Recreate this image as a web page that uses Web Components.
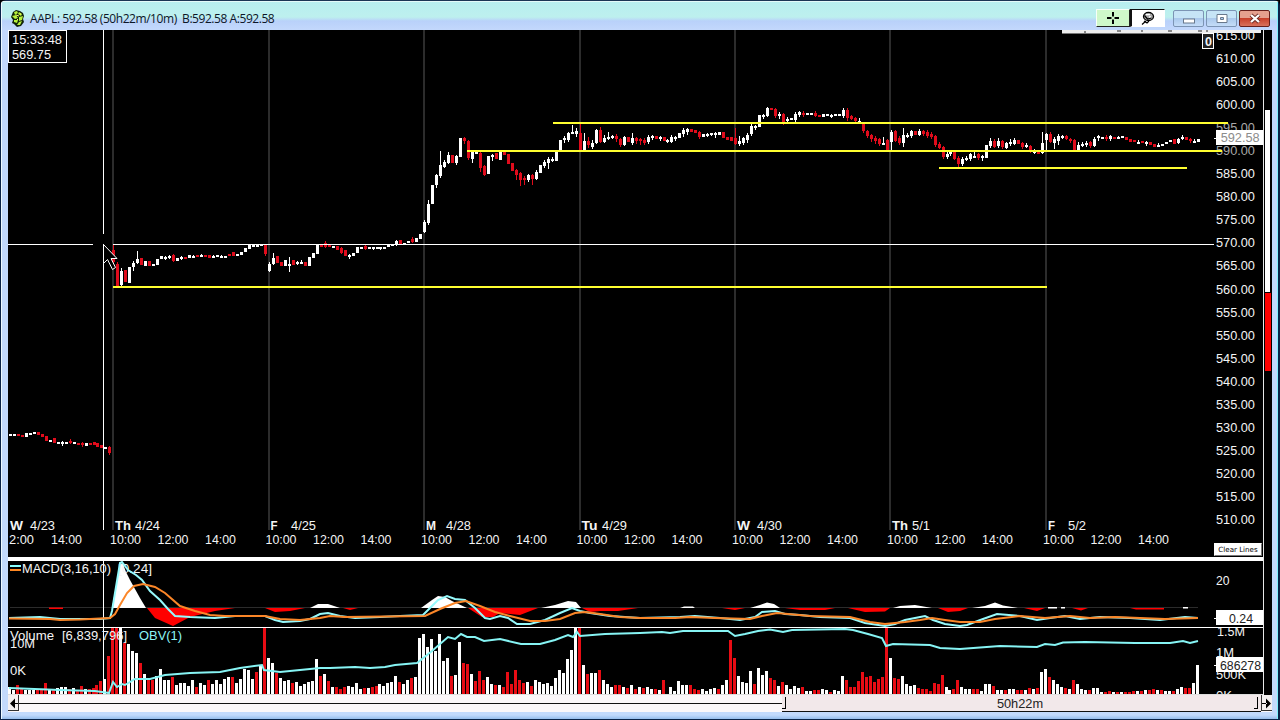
<!DOCTYPE html>
<html lang="en">
<head>
<meta charset="utf-8">
<title>AAPL: 592.58</title>
<style>
    body { margin: 0; background: #000; font-family: "Liberation Sans", sans-serif; overflow: hidden; }
</style>
</head>
<body>
<chart-window>
    <title-bar slot="title">AAPL: 592.58 (50h22m/10m)&nbsp; B:592.58 A:592.58</title-bar>
    <price-pane slot="price"></price-pane>
    <price-axis slot="price-axis"></price-axis>
    <macd-pane slot="macd"></macd-pane>
    <study-axis slot="macd-axis" kind="macd"></study-axis>
    <volume-pane slot="volume"></volume-pane>
    <study-axis slot="volume-axis" kind="volume"></study-axis>
    <range-meter slot="meter"></range-meter>
    <time-scroll slot="scroll">50h22m</time-scroll>
</chart-window>

<script>
//bars are one 10 minute candle each, 39 per trading day
const FIRST_X = 10.3;
const STEP = 3.986;
const barX = (k) => FIRST_X + k * STEP;

//colour, body top, body bottom, wick top, wick bottom (wicks are optional)
const CANDLES = `
w434-436 w434-435 r434-436 r435-437 w433-437 w433-435 w432-434 r432-435 r434-437 r436-441 w440-441 r438-443 w442-443
w442-444,441,446 w442-443 r441-443,439,444 w442-444 r443-444 r443-445,442,447 w443-446 r443-445 r442-445 r443-447 r445-448 w447-448 r447-453,446,455
r250-262,245,264 r264-286,262,287 w271-285,268,286 r270-282 w267-283 w263-267,261,271 w259-263,251,264 r258-265 w261-266 r261-266 w264-265 w259-265 w256-259
w257-258,256,260 w256-257,255,259 r255-261,254,262 w258-261 w257-258,256,260 r257-259 w255-258 w256-257,255,258 r255-257 w255-256,254,257 r255-256 r255-258 w256-257,255,258 w255-257
w256-257,255,258 w256-257 r254-256 r252-256 w254-255 w252-255 w248-252 w245-249 w245-246 w245-246 w244-246 r245-254,244,256
w264-271,262,272 w258-264,253,265 r256-263 r262-266 w260-266 w264-265,257,272 r260-265 w262-263,261,265 w262-263,260,264 r262-266 w257-266 w253-258 w244-254
r245-247 r243-247,241,248 r245-247 w246-247 r246-250 r248-253,247,254 r250-256 w255-256,254,259 w253-256 w247-253 w247-249 r246-249,245,250 w247-248
w247-248,247,250 w247-248 w247-248,247,250 w247-248 w245-247 w244-245 w241-244,240,246 r240-244 w243-244 w241-243 r239-242,237,243 w238-242 w234-239
w222-232,220,233 w204-223,200,225 w185-204 w175-185,174,188 w165-176,151,178 w162-167,160,168 w155-163,152,164 r155-163 w156-163,155,165 w138-157 r138-141,137,144 r141-158,140,160 w152-159,151,163
w152-153 r153-168,152,172 r166-175,165,176 w156-174 w155-157,154,161 r153-159 w152-160 r152-155 r154-164 r163-171 r170-175,169,180 r173-180,172,186 r178-180,176,185
w175-180,174,182 r175-179,174,185 w172-179,170,180 w165-173 w162-166,160,168 w159-163,157,169 w159-160,157,162 w152-161 w140-152 w138-140,136,143 w133-140,132,142 w132-133,125,134 w131-134,128,137
r133-150,124,151 w141-150,133,152 r141-145,137,148 w143-147,140,149 w130-143,129,144 r130-142,127,143 w138-142,135,143 w137-139,132,140 w136-138,135,139 r136-139,134,142 r139-145,138,147 w137-145,136,146 r137-142
w138-143,133,145 r138-141,137,144 r139-141,138,145 r140-143,138,145 w137-142,135,144 w136-138,135,140 r136-139 w137-138,136,141 r137-141 w140-141,139,143 w137-142,135,143 w137-138,136,141 w133-138 w130-134,128,137
w129-132,128,135 r129-132 r130-133 r132-137,131,139 w134-137 w134-135,133,137 w133-134,133,136 w133-134,132,138 w132-135 r132-138 r137-140 r137-141
r138-144,128,145 w141-144,136,146 w138-143,137,145 w135-140,133,143 w126-134,124,136 w126-128,125,130 w115-127 w115-116,114,119 w108-116,107,117 r108-110 r109-116,108,118 w114-116,112,119 r114-122,113,125
w119-121,117,123 w118-119 w114-120,112,122 w112-115,111,117 r113-115,111,117 w113-115 w113-114 r113-116,111,117 r115-117 w114-117 w114-115 w115-116,114,118 w114-116 w114-115 w110-116,108,118
r110-118,108,121 r116-119,115,120 r118-121,117,123 w121-123,118,124 r124-131,123,133 r131-136,130,138 r135-139,134,142 r138-141,136,144 r139-144,138,146 w143-144,137,145 r140-150,139,152
w132-142,130,150 r131-141,130,142 r138-143,136,145 w135-143,128,147 w135-136,133,138 w131-136,130,138 r131-135 w131-135,129,136 r131-134,130,136 r132-136,130,138 r134-137,132,139 r136-145,135,147 r144-148,142,149
r147-157,146,159 w154-157,152,159 w152-154,151,156 r152-159,151,160 r158-164,156,167 w159-164,157,166 w158-160,156,161 w154-159,153,161 w156-157,152,158 r154-158,153,160 w156-157,155,161 w145-158 w141-146,138,148
r141-147,139,148 w141-146,138,148 r141-147,140,149 w143-148,142,149 w142-144,139,146 w140-144,138,145 r140-144 r143-147,142,149 w145-147,143,148 r146-152,145,153 w151-152,149,154 r152-154 w143-153,132,154
w134-140,133,151 r134-142,132,143 w139-143,137,149 w136-141,134,145 w136-137,135,139 r136-139,135,140 r139-141,138,143 r140-150,139,151 w145-150,142,151 w144-146,142,147 w143-145,141,147 r142-146,141,148 w139-146,137,147
w136-138,135,141 w137-138 r137-139,135,141 w136-139,135,141 r137-139 w137-138,136,139 w136-137 r137-140 r139-142 r140-142 w142-143,140,144 r141-143 w142-144,141,146 r142-145 r144-147
w145-146,143,147 w144-145 w142-144 w140-142 r139-144 w139-143,138,144 w137-139,135,140 r137-140 r139-141,138,143 w141-142,139,143 w139-142
`.trim().split(/\s+/).map((c) => {
    const [body, hi, lo] = c.slice(1).split(",");
    const [top, bottom] = body.split("-").map(Number);
    return { up: c[0] === "w", top, bottom, hi: +(hi || top), lo: +(lo || bottom) };
});

//bar heights in pixels, w for up volume and r for down volume
const VOLUME = `
w7 w4 r9 r5 w4 w4 w4 r5 r4 r11 w5 r5 w6 w7 w7 r5 w6 r4 r8 w5 r5 r6 r9 r13 w15 r38
r66 r66 w66 r51 w50 w43 w41 r31 w20 r14 r14 w18 w25 w14 w14 r17 w9 w11 w11 w8 w14 r7 w11 w9 r14 w10 w14 w10 w15 w17 r17 w11 w15 w25 w24 w15 r22 w28 r66
w36 w31 r21 w16 w13 w14 r11 w12 w8 w10 w12 w13 w35 r18 w20 r13 w7 r7 r5 r7 w8 w7 w11 w5 r6 w6 r7 r8 w10 w8 w11 w12 w18 r12 w10 w14 r16 w17 w56
w60 w47 w55 w43 w60 w33 w36 r18 w19 w52 r31 r30 w20 r13 r23 r14 w17 w10 r9 w9 r7 r22 r10 r24 r14 r11 w12 r8 w14 w12 w10 w11 w8 w16 w24 w21 w35 w44 w66
r66 w29 r20 w21 w21 r24 w14 w10 w7 r9 r9 w7 r6 w9 r5 w7 r6 w7 w5 r5 w4 r14 w0 w7 w3 w13 w9 w9 r9 r5 r4 w5 w3 w5 w6 r5 w9 w14 r54
r36 w18 w12 w11 w23 r10 w26 w19 w23 r16 r14 w8 r12 w9 w5 w8 w6 r7 w3 w3 r4 r4 w5 w4 r2 w4 w3 w18 r14 r7 r7 r13 r22 r17 r18 r12 r15 r17 r66
w36 r16 r15 w18 w10 w8 w9 r6 r5 r5 r3 r11 r10 r19 w7 w4 r5 r14 w7 w5 w5 r5 r5 w3 w10 w10 r8 w4 w4 r4 w5 w5 r4 r4 w4 r6 w5 r6 w22
w25 r17 w14 w10 w7 r6 w5 r14 w10 w5 w4 r4 w6 w6 w2 r2 r3 w2 r2 w2 r2 r2 r3 w3 r3 w4 r4 r5 w4 r4 w3 w3 r3 w5 w7 r6 r6 w11 w29
`.trim().split(/\s+/);

const DAYS = [
    { x: 113, name: "Th", date: "4/24", at: 135 },
    { x: 268.5, name: "F", date: "4/25", at: 291 },
    { x: 424, name: "M", date: "4/28", at: 446 },
    { x: 579.5, name: "Tu", date: "4/29", at: 602 },
    { x: 735, name: "W", date: "4/30", at: 757 },
    { x: 890, name: "Th", date: "5/1", at: 912 },
    { x: 1046, name: "F", date: "5/2", at: 1068 },
];

const label = (x, y, w, text, extra = "") =>
    `<text x="${x}" y="${y}" textLength="${w}" lengthAdjust="spacingAndGlyphs" ${extra}>${text}</text>`;

const SVG_STYLE = `
    :host { display: block; overflow: hidden; background: #000; }
    svg { display: block; }
    text { font: 13.6px "Liberation Sans", sans-serif; fill: #f4f4f4; }
`;

class ChartWindow extends HTMLElement {
    constructor(){
        super();
        this.attachShadow({mode:"open"});
    }
    connectedCallback(){
        this.shadowRoot.innerHTML = `
<style>
    :host {
        display: flex;
        flex-direction: column;
        box-sizing: border-box;
        width: 1280px;
        height: 720px;
        padding: 0 8px 8px 8px;
        background:
            linear-gradient(#1b3556, #1b3556) 0 0 / 100% 1px no-repeat,
            linear-gradient(#e4fafa, #e4fafa) 0 1px / 100% 1px no-repeat,
            linear-gradient(#0a2348, #0a2348) 0 100% / 100% 1px no-repeat,
            linear-gradient(90deg, #0a2348 1px, #eefaff 1px 2px, transparent 2px 1277px, #7ef0fb 1277px 1278px, #0a2348 1278px),
            linear-gradient(#b7eef0 0, #bdf0ee 17px, #b9d1fa 21px, #c3d8fc 30px, #c0d8fc 90px, #c3dafc 715px, #8ab6e8 100%);
        border-radius: 6px 6px 0 0;
    }
    .body { display: flex; height: 665px; background: #000; }
    .charts { display: flex; flex-direction: column; width: 1255px; border-right: 1px solid #e8e8e8; }
    .row { display: flex; overflow: hidden; }
    .price { height: 527px; }
    .macd { height: 66px; border-top: 4px solid #fff; }
    .volume { height: 66px; border-top: 1px solid #fff; border-bottom: 1px solid #ddd; }
</style>
<slot name="title"></slot>
<div class="body">
    <div class="charts">
        <div class="row price"><slot name="price"></slot><slot name="price-axis"></slot></div>
        <div class="row macd"><slot name="macd"></slot><slot name="macd-axis"></slot></div>
        <div class="row volume"><slot name="volume"></slot><slot name="volume-axis"></slot></div>
    </div>
    <slot name="meter"></slot>
</div>
<slot name="scroll"></slot>`;
    }
}

class TitleBar extends HTMLElement {
    constructor(){
        super();
        this.attachShadow({mode:"open"});
    }
    connectedCallback(){
        this.shadowRoot.innerHTML = `
<style>
    :host {
        display: flex;
        align-items: center;
        height: 30px;
        padding-top: 6px;
        box-sizing: border-box;
        color: #0c1628;
        font: 12px "Open Sans", "Noto Sans", sans-serif;
    }
    .icon { margin: 0 5px 0 2px; }
    .name { flex: 1; white-space: pre; letter-spacing: -0.44px; }
    .tool { width: 34px; height: 18px; box-sizing: border-box; border: 1px solid #f8fff8; border-bottom: 1px solid #222; border-right: 1px solid #222; background: #cff8ca; }
    .tool.on { width: 35px; background: #fff; border: 1px solid #fff; border-top-color: #111; border-left: 2px solid #111; }
    .win { width: 31px; height: 17px; margin-left: 2px; box-sizing: border-box; border: 1px solid #7c94b4; border-radius: 2px; background: linear-gradient(#c6e4f6 45%, #abc9ec 50%, #c4dcf8); }
    .close { border-color: #66201c; background: linear-gradient(#e5a08e 45%, #c8402a 50%, #d8725c); }
    .wins { display: flex; margin: 0 2px 0 6px; }
    svg { display: block; }
</style>
<svg class="icon" width="15" height="18" viewBox="0 0 15 18">
    <path d="M3 3l3-2 4 1 3 2 1 3-1 3 1 3-3 4-4 1-3-3-2-1 1-3-2-3z" fill="#10220a"/>
    <path d="M4 3l3-1 1 2-3 2zM9 3l3 2-1 2-3-2zM2 7l4-1 2 3-3 1zM9 8l4-1-1 4-3 1zM4 11l4 0-1 3-3-1zM9 13l3-1-2 4-3 0z" fill="#b6f23a"/>
    <path d="M6 6l3 1M8 10l-1 1M10 5l1 0" stroke="#f8ff60" fill="none"/>
</svg>
<span class="name"><slot></slot></span>
<div class="tool"><svg width="32" height="16"><path d="M16 2v4.500M16 9.500v4.500M10 8h4.500M17.500 8h4.500" stroke="#000" stroke-width="2" fill="none"/></svg></div>
<div class="tool on"><svg width="32" height="16"><ellipse cx="16.500" cy="6.500" rx="5" ry="4" fill="#aaa" stroke="#000" stroke-width="1.300"/><path d="M14 4.500h4M18 6v2" stroke="#fff" stroke-width="1.500" fill="none"/><path d="M12.500 5.500l3 3.500 4-1M12 11l3 2 2-2M14 11l-4 3.500" stroke="#000" stroke-width="1.200" fill="none"/></svg></div>
<div class="wins">
    <div class="win"><svg width="29" height="15"><rect x="9.500" y="8" width="11" height="4" fill="#fff" stroke="#68788c"/></svg></div>
    <div class="win"><svg width="29" height="15"><path d="M10 3.500h10v8h-10zM13.500 6.500v2h3v-2z" fill="#fff" fill-rule="evenodd" stroke="#68788c"/></svg></div>
    <div class="win close"><svg width="29" height="15"><path d="M11 4l8 7M19 4l-8 7" stroke="#6b2b24" stroke-width="4"/><path d="M11 4l8 7M19 4l-8 7" stroke="#fff" stroke-width="2.300"/></svg></div>
</div>`;
    }
}

class PricePane extends HTMLElement {
    constructor(){
        super();
        this.attachShadow({mode:"open"});
    }
    connectedCallback(){
        const times = DAYS.map((d) => label(d.x - 3, 544, 31, "10:00") + label(d.x + 44.500, 544, 31, "12:00") + label(d.x + 92, 544, 31, "14:00")).join("");
        this.shadowRoot.innerHTML = `
<style>
    ${SVG_STYLE}
    .bold { font-weight: bold; }
</style>
<svg width="1206" height="527" viewBox="8 30 1206 527">
    ${DAYS.map((d) => `<rect x="${Math.floor(d.x - 0.5)}" y="30" width="2" height="500" fill="#2c2c2c"/>`).join("")}
    ${this.candles()}
    <g stroke="#ffff30" stroke-width="2">
        <path d="M553 123H1214M467 151H1214"/>
        <path d="M939 168H1187M113 287H1047"/>
    </g>
    <g fill="#fff">
        <rect x="8" y="244" width="85" height="1"/>
        <rect x="113" y="244" width="1101" height="1"/>
        <rect x="103" y="30" width="1" height="204"/>
        <rect x="103" y="244" width="1" height="286"/>
    </g>
    <path d="M103.500 244.500L117 258.500H111L115.500 267.500L112.500 269.500L107.500 259.500L103.500 263.500z" fill="#000" stroke="#fff"/>
    ${label(10, 530, 13, "W", 'class="bold"')}${label(30, 530, 25, "4/23")}
    ${DAYS.map((d) => label(d.x + 2, 530, { Th: 16, F: 7, M: 10, Tu: 16, W: 13 }[d.name], d.name, 'class="bold"') + label(d.at, 530, d.date.length > 3 ? 25 : 18, d.date)).join("")}
    ${label(9, 544, 25, "2:00")}${label(51, 544, 31, "14:00")}
    ${times}
    <rect x="8.500" y="30.500" width="58" height="32" fill="#000" stroke="#fff"/>
    ${label(12, 44, 50, "15:33:48")}
    ${label(12, 59, 39, "569.75")}
    <path d="M1062 30h152v3.500h-152z" fill="#eee"/>
    <path d="M1085 33v-2M1117 31h4M1142 30v2M1168 31h4M1198 31h4M1207 30v2" stroke="#222"/>
    <rect x="1202.500" y="33.500" width="11" height="15" fill="#222" stroke="#fff"/>
    ${label(1205, 45.500, 7, "0", 'class="bold"')}
</svg>`;
    }
    candles(){
        return CANDLES.map((c, k) => {
            const x = Math.round(barX(k) - 0.5);
            const fill = c.up ? "#fff" : "#e00c1c";
            //flat candles still get a visible body
            const h = Math.max(c.bottom - c.top, 2);
            return `<g fill="${fill}"><rect x="${x}" y="${c.hi}" width="1" height="${c.lo - c.hi}"/><rect x="${x - 1}" y="${c.top}" width="3" height="${h}"/></g>`;
        }).join("");
    }
}

class PriceAxis extends HTMLElement {
    constructor(){
        super();
        this.attachShadow({mode:"open"});
    }
    connectedCallback(){
        let rows = "";
        for (let p = 615; p >= 510; p -= 5) {
            const dim = p === 595 || p === 590 ? ' class="dim"' : "";
            rows += `<div${dim}>${p}.00</div>`;
        }
        this.shadowRoot.innerHTML = `
<style>
    :host { display: block; position: relative; width: 49px; height: 527px; overflow: hidden; background: #000; color: #f4f4f4; font-size: 13.6px; }
    .scale { margin: -6.5px 0 0 2px; transform: scaleX(0.937); transform-origin: 0 0; }
    .scale div { height: 23.1px; line-height: 23.1px; }
    .scale .dim { color: #a8a8a8; }
    .strip { position: absolute; left: 0; top: 0; width: 47px; height: 3px; background: #eee; }
    .tag { position: absolute; left: 2px; top: 100px; width: 47px; height: 15px; background: #fff; color: #8c8c8c; line-height: 16px; }
    .tag span { display: block; padding-left: 5px; transform: scaleX(0.937); transform-origin: 0 0; }
    .tick { position: absolute; left: 0; top: 108px; width: 3px; height: 1px; background: #fff; }
    .line { position: absolute; left: 0; height: 2px; background: #ffff30; }
    button { position: absolute; left: 0; top: 513px; width: 48px; height: 13px; padding: 0; border: 1px solid #fff; border-right-color: #777; border-bottom-color: #777; background: #fff; color: #000; font: 7.1px "DejaVu Sans", sans-serif; line-height: 11px; white-space: nowrap; }
</style>
<div class="scale">${rows}</div>
<div class="strip"></div>
<div class="line" style="top:92px; width:14px"></div>
<div class="line" style="top:120px; width:8px"></div>
<div class="tick"></div>
<div class="tag"><span>592.58</span></div>
<button>Clear Lines</button>`;
    }
}

class MacdPane extends HTMLElement {
    constructor(){
        super();
        this.attachShadow({mode:"open"});
    }
    connectedCallback(){
        this.shadowRoot.innerHTML = `
<style>
    ${SVG_STYLE}
</style>
<svg width="1206" height="66" viewBox="8 561 1206 66">
    <path d="M10 607.500H1198" stroke="#2c2c2c"/>
    <path fill="#f00" d="M49 607.500h14v1.500h-14zM147 608L155 618L173 626L190 617L215 611L235 608zM265 608L275 612L290 611L305 608zM343 608L350 610L358 608z
        M468 608L482 617L493 617L500 613L520 615L538 608zM582 608L590 612L600 611L618 611L638 608zM722 608L735 610L745 608zM785 608L800 610L825 610L835 608z
        M848 608L865 612L885 611.500L890 608zM938 608L948 612L960 611L968 608zM1024 608L1037 611L1045 608zM1072 608L1081 610.500L1088 608zM1130 608h34v1.500h-28z"/>
    <path fill="#fff" d="M112 608L120 563L123 564L126 572L130 580L140 598L146 608zM310 608L318 604L328 604L340 608zM421 608L432 600L438 596L445 597L452 601L467 608z
        M541 608L555 605L568 601L576 602L581 608zM680 608L684 606.500H693L695 608zM750 608L760 605L767 602.500L774 604L780 608zM893 608L900 606L915 605L932 608z
        M972 608L985 606L995 602.500L1003 605.500L1018 608zM1048 607h9v1.500h-9zM1061 607h4v1.500h-4zM1183 607h5v1.500h-5z"/>
    <rect x="103" y="561" width="1" height="66" fill="#fff"/>
    <path d="M10 566H21" stroke="#8ff" stroke-width="2"/>
    <path d="M10 570H21" stroke="#f82" stroke-width="2"/>
    ${label(22, 573, 89, "MACD(3,16,10)")}
    ${label(118, 573, 34, "[0.24]")}
    <polyline fill="none" stroke="#96fafc" stroke-width="2" points="9,618 40,617 60,619 100,619 110,618 112,611 120,563 122,562 128,570 136,575 142,580 150,591 160,600 168,609 175,616 190,617 215,618 235,616 265,616
        275,620 283,622 300,621 310,619 320,614 328,613 340,616 355,618 380,617 400,616 423,615 430,608 438,600 447,596 455,599 465,600 475,608 485,618 490,619 500,616 508,618 517,624 530,624 545,620 560,613 572,608 580,611 590,613
        610,616 640,618 680,617 695,616 720,618 740,620 755,617 762,612 775,611 785,614 800,615 820,617 850,618 865,623 885,626 895,624 905,620 915,618 925,616 933,620 945,624 960,626 967,625 983,619 997,614 1020,616 1037,620
        1050,618 1065,616 1080,619 1100,617 1130,618 1160,620 1185,617 1198,618"/>
    <polyline fill="none" stroke="#fb8628" stroke-width="2" points="9,618.500 50,619 60,620 80,619.500 110,618 115,614 120,605 127,593 134,586 143,584 155,587 165,593 180,606 195,611 210,615 225,616 265,616 280,619 300,620 320,618
        330,616 345,617 425,616 440,609 455,603 466,601 480,606 495,612 510,616 530,621 545,621 560,619 575,613 585,612 600,614 620,617 640,618 675,618 690,617 715,618 750,619 762,616 777,613 810,616 850,617 870,622 885,624
        905,622 920,620 932,618 945,620 960,622 980,622 995,619 1020,616 1045,618 1070,616 1090,618 1115,617 1165,619 1198,618"/>
</svg>`;
    }
}

class VolumePane extends HTMLElement {
    constructor(){
        super();
        this.attachShadow({mode:"open"});
    }
    connectedCallback(){
        const bars = VOLUME.map((v, k) => {
            const h = +v.slice(1);
            return `<rect x="${Math.round(barX(k) - 2.5)}" y="${694 - h}" width="3" height="${h}" fill="${v[0] === "w" ? "#fff" : "#e80c14"}"/>`;
        }).join("");
        this.shadowRoot.innerHTML = `
<style>
    ${SVG_STYLE}
    .obv { fill: #8cf6f6; }
</style>
<svg width="1206" height="66" viewBox="8 628 1206 66">
    ${bars}
    <rect x="103" y="628" width="1" height="66" fill="#fff"/>
    ${label(10, 648, 25, "10M")}
    ${label(10, 675, 16, "0K")}
    ${label(10, 640, 44, "Volume")}
    ${label(62, 640, 65, "[6,839,796]")}
    ${label(139, 640, 43, "OBV(1)", 'class="obv"')}
    <polyline fill="none" stroke="#86f4f4" stroke-width="2" points="9,688 60,690 95,691 109,693 113,682 117,687 122,684 125,685 135,679 150,679 165,675 190,673 220,672 240,668 262,665 264,670 280,672 300,670 320,668 330,668
        355,667 370,668 385,667 395,665 417,663 432,651 448,637 455,639 461,634 467,637 475,637 484,641 500,639 521,644 540,644 555,640 568,635 573,637 577,632 580,636 605,634 640,633 662,632 670,633 683,631 728,631 735,636 745,634
        758,631 770,629.500 783,632 792,630 845,629 853,630 868,634 882,638 886,646 893,644 930,645 940,648 960,649 1000,646 1037,647 1045,644 1055,645 1063,642.500 1085,642 1135,643 1170,643 1183,641 1190,643 1198,641"/>
</svg>`;
    }
}

class StudyAxis extends HTMLElement {
    constructor(){
        super();
        this.attachShadow({mode:"open"});
    }
    connectedCallback(){
        const parts = {
            macd: `
<svg width="49" height="66" viewBox="1214 561 49 66">
    ${label(1216, 585, 13.5, "20")}
    <rect x="1216" y="610" width="47" height="15" fill="#fff"/>
    <path d="M1211 618.500h5" stroke="#fff"/>
    ${label(1229, 623, 24, "0.24", 'class="dark"')}
</svg>`,
            volume: `
<svg width="49" height="66" viewBox="1214 628 49 66">
    ${label(1217, 635.500, 28, "1.5M")}
    ${label(1216, 657, 18, "1M")}
    ${label(1216, 678.500, 30, "500K")}
    ${label(1216, 700, 16, "0K")}
    <rect x="1216" y="657" width="47" height="15" fill="#fff"/>
    <path d="M1211 665.500h5" stroke="#fff"/>
    ${label(1220, 670, 41, "686278", 'class="dark"')}
</svg>`,
        };
        this.shadowRoot.innerHTML = `
<style>
    ${SVG_STYLE}
    text.dark { fill: #222; }
</style>
${parts[this.getAttribute("kind")]}`;
    }
}

class RangeMeter extends HTMLElement {
    constructor(){
        super();
        this.attachShadow({mode:"open"});
    }
    connectedCallback(){
        this.shadowRoot.innerHTML = `
<style>
    :host { display: flex; flex-direction: column; width: 8px; padding: 80px 1px 0 1px; box-sizing: border-box; }
    .up { height: 182px; background: #fff; margin-right: 1px; }
    .down { height: 78px; margin-top: 1px; background: #f00; }
</style>
<div class="up"></div>
<div class="down"></div>`;
    }
}

class TimeScroll extends HTMLElement {
    constructor(){
        super();
        this.attachShadow({mode:"open"});
    }
    connectedCallback(){
        this.shadowRoot.innerHTML = `
<style>
    :host { display: flex; height: 17px; background: #fbf7f9; font-size: 12.8px; color: #222; }
    .track { width: 763px; background: linear-gradient(#111, #111) 0 8px / 100% 1px no-repeat; }
    .thumb { display: flex; flex: 1; align-items: center; justify-content: space-between; box-sizing: border-box; padding-right: 3px; background: #f2e8ea; border-bottom: 1px solid #111; }
    .edge { width: 3px; height: 11px; border-right: 1px solid #000; border-bottom: 1px solid #000; }
    .arrow { width: 10px; border-right: 1px solid #333; border-bottom: 1px solid #333; height: 15px; background: #f4f0f0; }
    .arrow.next { border-left: 1px solid #333; border-right: 0; }
    svg { display: block; }
</style>
<div class="arrow"><svg width="10" height="15"><path d="M2 8.500l5-5v10zM6 8h4v1h-4z"/></svg></div>
<div class="track"></div>
<div class="thumb"><div class="edge"></div><span><slot></slot></span><div class="edge"></div></div>
<div class="arrow next"><svg width="10" height="15"><path d="M9 8.500l-5-5v10zM0 8h5v1h-5z"/></svg></div>`;
    }
}

customElements.define("title-bar", TitleBar)
customElements.define("price-pane", PricePane)
customElements.define("price-axis", PriceAxis)
customElements.define("macd-pane", MacdPane)
customElements.define("volume-pane", VolumePane)
customElements.define("study-axis", StudyAxis)
customElements.define("range-meter", RangeMeter)
customElements.define("time-scroll", TimeScroll)
customElements.define("chart-window", ChartWindow)
</script>
</body>
</html>
